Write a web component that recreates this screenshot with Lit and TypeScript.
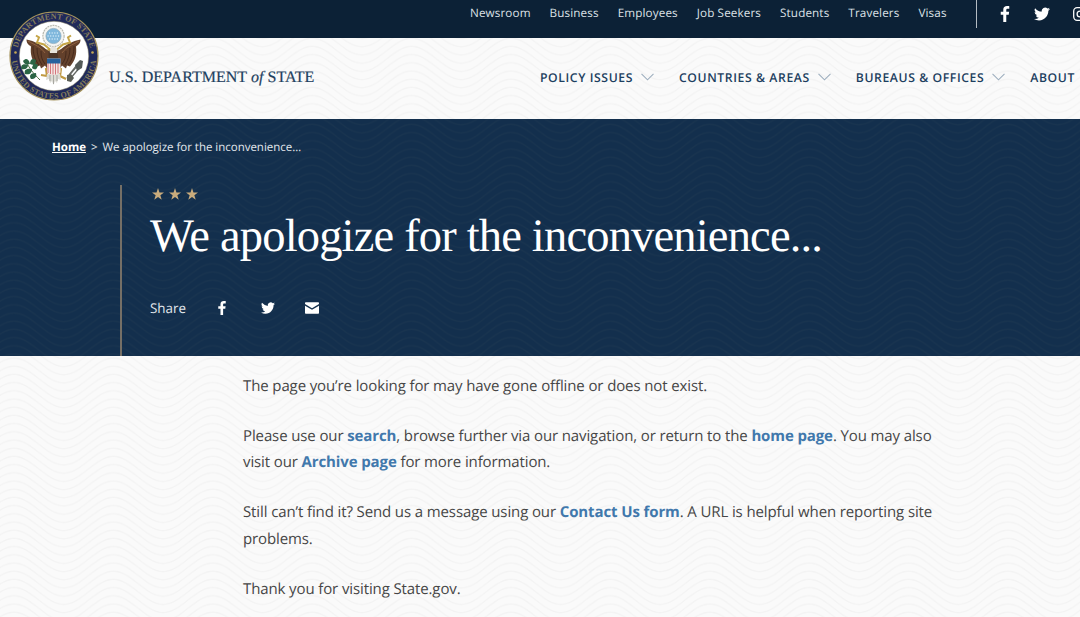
import { LitElement, css, html, svg } from 'lit'
import { customElement, property } from 'lit/decorators.js'

const UTILITY_LINKS = ['Newsroom', 'Business', 'Employees', 'Job Seekers', 'Students', 'Travelers', 'Visas']
const MAIN_LINKS = ['Policy Issues', 'Countries & Areas', 'Bureaus & Offices']

const ICONS = {
  facebook: svg`<path d="M9.4 24V13.2H5.6V8.8h3.8V5.6C9.4 1.9 11.6 0 15 0c1.6 0 3 .1 3.4.2v3.9h-2.3c-1.9 0-2.2.9-2.2 2.2v2.5h4.3l-.6 4.4h-3.7V24z"/>`,
  twitter: svg`<path d="M24 4.6a10 10 0 0 1-2.8.8 4.9 4.9 0 0 0 2.1-2.7 9.9 9.9 0 0 1-3.1 1.2 4.9 4.9 0 0 0-8.4 4.5A14 14 0 0 1 1.7 3.2a4.9 4.9 0 0 0 1.5 6.5 4.9 4.9 0 0 1-2.2-.6v.1a4.9 4.9 0 0 0 3.9 4.8 4.9 4.9 0 0 1-2.2.1 4.9 4.9 0 0 0 4.6 3.4A9.9 9.9 0 0 1 0 19.5 13.9 13.9 0 0 0 7.5 21.7c9.1 0 14.3-7.7 14-14.6A10 10 0 0 0 24 4.6z"/>`,
  instagram: svg`<g fill="none" stroke="currentColor" stroke-width="2.2"><rect x="1.2" y="1.2" width="21.6" height="21.6" rx="6"/><circle cx="12" cy="12" r="5"/></g><circle cx="18.3" cy="5.7" r="1.5"/>`,
  mail: svg`<path d="M1.8 2h20.4C23.3 2 24 2.7 24 3.7v1.600l-12 7-12-7V3.700C0 2.700.7 2 1.800 2z"/><path d="M0 8l12 7 12-7v12.200c0 1.100-.7 1.800-1.800 1.800H1.800C.7 22 0 21.300 0 20.200z"/>`,
}

@customElement('social-icon')
export class SocialIcon extends LitElement {
  @property({ type: String }) name: keyof typeof ICONS = 'facebook'

  static styles = css`
    :host { display: block; flex: none; }
    svg { display: block; width: 100%; height: 100%; fill: currentColor; }
  `

  render() {
    return html`<svg viewBox="0 0 24 24" aria-hidden="true">${ICONS[this.name]}</svg>`
  }
}

@customElement('wave-pattern')
export class WavePattern extends LitElement {
  static styles = css`
    :host { position: absolute; inset: 0; overflow: hidden; }
    svg { display: block; width: 100%; height: 100%; }
    path { fill: none; stroke: currentColor; stroke-width: 1.2; }
  `

  render() {
    // the wave is taller than one tile, so neighbouring rows are drawn in too
    const rows = [-3, -2, -1, 0, 1, 2, 3]
    return html`
      <svg aria-hidden="true">
        <defs>
          <pattern id="wave" x="14" y="1.5" width="99.4" height="8.2" patternUnits="userSpaceOnUse">
            ${rows.map(n => svg`<path transform="translate(0 ${n * 8.2})" d="M-49.7 12.5C-31.6 12.5-18.1-12.5 0-12.5S31.6 12.5 49.7 12.5 81.3-12.5 99.4-12.5 131 12.5 149.1 12.5"/>`)}
          </pattern>
        </defs>
        <rect width="100%" height="100%" fill="url(#wave)"/>
      </svg>
    `
  }
}

@customElement('state-seal')
export class StateSeal extends LitElement {
  static styles = css`
    :host { display: block; }
    svg { display: block; width: 100%; height: 100%; }
    text { font: 700 8px 'Liberation Serif', serif; fill: #857e5b; }
  `

  render() {
    return html`
      <svg viewBox="0 0 90 90" role="img" aria-label="Department of State seal">
        <defs>
          <path id="top" d="M8 45a37 37 0 0 1 74 0"/>
          <path id="bottom" d="M2.500 45a42.500 42.500 0 0 0 85 0"/>
        </defs>
        <circle cx="45" cy="45" r="44" fill="#20295a" stroke="#a5935b" stroke-width="1.2"/>
        <circle cx="45" cy="45" r="34.700" fill="#fff" stroke="#8d8766" stroke-width=".5"/>
        <text><textPath href="#top" startOffset="50%" text-anchor="middle" textLength="100">DEPARTMENT OF STATE</textPath></text>
        <text><textPath href="#bottom" startOffset="50%" text-anchor="middle" textLength="124">UNITED STATES OF AMERICA</textPath></text>
        <circle cx="6.5" cy="41.5" r="1.3" fill="#c6a854"/>
        <circle cx="83.5" cy="41.5" r="1.3" fill="#c6a854"/>

        <!-- glory -->
        <circle cx="44.500" cy="25" r="10.600" fill="#f5f5f2" stroke="#b8b8af" stroke-width="1.200" stroke-dasharray="2 .7"/>
        <circle cx="44.500" cy="25" r="7.600" fill="#7fb7dc" stroke="#8aa9bc" stroke-width=".7"/>
        <path d="M40 22h9M38.500 25h12M40 28h9" stroke="#c9e5f5" stroke-width="1.300" stroke-dasharray="1.200 1.400"/>

        <!-- wings -->
        <path d="M17.500 28.500c0 4 2 5 4.500 7-1 8 1 14 6 20l3-1 1 3 4-3 2 3 3-6v-12c-6 0-6-7-23.500-11z" fill="#63402b"/>
        <path d="M71.500 28.500c0 4-2 5-4.500 7 1 8-1 14-6 20l-3-1-1 3-4-3-2 3-3-6v-12c6 0 6-7 23.500-11z" fill="#63402b"/>
        <path d="M24 35c0 8 2 14 6 19M28 37c0 7 2 12 5 17M32 40c0 6 1 9 4 13M65 35c0 8-2 14-6 19M61 37c0 7-2 12-5 17M57 40c0 6-1 9-4 13" fill="none" stroke="#3f2418" stroke-width=".8"/>
        <path d="M19 30c7 4 13 6 17 12M70 30c-7 4-13 6-17 12" fill="none" stroke="#9a6845" stroke-width=".8"/>

        <!-- ribbon -->
        <path d="M27 24.500l3 2-2 5 7 2 6 5M62 24.500l-3 2 2 5-7 2-6 5" fill="none" stroke="#c5a548" stroke-width="2"/>

        <!-- legs and tail -->
        <path d="M37 57l1 8-6-1M52 57l-1 8 6 3" fill="none" stroke="#c19a42" stroke-width="2.200"/>
        <path d="M38 63l-1 6 3-1 1 4 2-2 1.500 4 1.500-4 2 2 1-4 3 1-1-6z" fill="#dddcd5"/>
        <path d="M41 64v6M44.500 64v9M48 64v6" stroke="#9a9a94" stroke-width=".8"/>

        <!-- head -->
        <path d="M40 48c-1-6-1-10 3.500-11.500 4-.5 6 4 5.500 11.500z" fill="#4c3528"/>
        <path d="M41 42c-1-4 0-6 3-6.500 3-.5 5 2 4 6.500z" fill="#e7e4dc"/>
        <path d="M41 37l-3.500 2 4 .8z" fill="#c9a337"/>

        <!-- olive branch -->
        <path d="M17 50c3 7 7 12 14 19" fill="none" stroke="#4c7142" stroke-width="1"/>
        <path d="M14 50c4-4 6-1 7 3-4 1-6 0-7-3zM19 54c-6-2-7 1-7 4 5 1 7-1 7-4zM21 53c0-5 3-6 6-4 0 4-2 6-6 4zM23 58c-7-1-8 2-7 5 5 1 7-1 7-5zM23 57c1-5 3-5 6-3-1 4-2 6-6 3zM27 62c-6 0-7 3-5 6 4 0 6-2 5-6z" fill="#2c6545"/>

        <!-- arrows -->
        <path d="M58 67l11-13M61 68l11-13M60 64l8-10" stroke="#666864" stroke-width="1.300"/>
        <path d="M66 54l5-5 3 1-1 7-5 3z" fill="#535957"/>
        <path d="M58 64l4-1 3 4-3 4-4-1z" fill="#5c5f57"/>

        <!-- shield -->
        <path d="M38 47.500h13.500v14c-2 2-4 2-6.700 2.500-3-.5-5-.5-6.800-2.500z" fill="#f3e6e3"/>
        <path d="M39 49v13M41.500 49v14M44 49v14.500M46.500 49v14.500M49 49v13.500" stroke="#d3757a" stroke-width="1"/>
        <path d="M38 47.500h13.500v5H38z" fill="#27619d"/>
      </svg>
    `
  }
}

@customElement('app-root')
export class AppRoot extends LitElement {
  static styles = css`
    :host {
      --navy: #132f4d;
      --gold: #c9ab7c;
      display: flex;
      flex-direction: column;
      position: relative;
      height: 617px;
      overflow: hidden;
      background: #fafafa;
      color: #464646;
      font-family: 'Open Sans', sans-serif;
      text-rendering: geometricPrecision;
    }
    a { color: inherit; text-decoration: none; }

    .page-waves { color: #f3f3f3; }
    .topbar, .header, .hero, .content { position: relative; flex: none; box-sizing: border-box; }

    .topbar {
      display: flex;
      height: 38px;
      padding-left: 470px;
      background: #0c2136;
      color: #dde2e7;
    }
    .utility {
      display: flex;
      gap: 19px;
      width: 506px;
      flex: none;
      font-size: 11.7px;
      line-height: 26px;
      letter-spacing: .12px;
      white-space: nowrap;
    }
    .social {
      display: flex;
      align-items: center;
      gap: 20.5px;
      height: 28px;
      padding-left: 20px;
      border-left: 1px solid #b4bcc3;
      color: #fff;
    }
    .social social-icon { width: 16px; height: 16px; }
    .social social-icon:last-child { margin-left: 3px; width: 14px; height: 14px; }

    .header {
      display: flex;
      height: 80.5px;
      padding-left: 109px;
      align-items: center;
      color: #1d3f60;
      white-space: nowrap;
    }
    .seal { position: absolute; left: 9px; top: -27px; width: 90px; height: 90px; }
    .brand {
      width: 431px;
      flex: none;
      font: 16px 'Liberation Serif', serif;
      letter-spacing: .04px;
      padding-bottom: 1px;
      -webkit-text-stroke: .2px currentColor;
    }
    .main-nav {
      display: flex;
      align-items: center;
      gap: 25px;
      padding-bottom: 2px;
      font-size: 12.2px;
      font-weight: 600;
      letter-spacing: .6px;
      text-transform: uppercase;
    }
    .main-nav a { display: flex; align-items: center; gap: 8px; }
    .chevron { width: 13px; height: 8px; fill: none; stroke: #9eafbf; stroke-width: 1.1; }

    .hero {
      height: 237.5px;
      background: var(--navy);
      color: #fff;
    }
    .hero-waves { color: #19344f; }
    .crumbs {
      display: flex;
      position: relative;
      gap: 5px;
      padding: 19px 0 0 52px;
      font-size: 11.5px;
      line-height: 20px;
      letter-spacing: -.02px;
      color: #e2e7ec;
    }
    .crumbs a { font-weight: 700; text-decoration: underline; color: #fff; }
    .hero-body {
      position: relative;
      box-sizing: border-box;
      height: 171px;
      margin: 27.5px 0 0 120px;
      padding: 3px 0 0 28px;
      border-left: 2px solid #756f66;
    }
    .stars { display: flex; gap: 5.4px; padding-left: 1.5px; }
    .stars svg { width: 12px; height: 12px; fill: var(--gold); }
    h1 {
      margin: 7px 0 0;
      font: 400 46.5px/60px 'Liberation Serif', serif;
      letter-spacing: -.82px;
      white-space: nowrap;
    }
    .share {
      display: flex;
      align-items: center;
      margin-top: 29px;
      font-size: 13.4px;
      line-height: 24px;
      color: #e2e7ec;
    }
    .share social-icon { width: 14px; height: 14px; color: #fff; }
    .share social-icon:nth-of-type(1) { margin-left: 28.5px; }
    .share social-icon:nth-of-type(2) { margin-left: 32px; }
    .share social-icon:nth-of-type(3) { margin-left: 30px; }

    .content {
      padding: 17px 0 0 243px;
      font-size: 15px;
      line-height: 26.7px;
      letter-spacing: -.115px;
      white-space: nowrap;
    }
    .content p { margin: 0 0 23px; }
    .content a { font-weight: 700; color: #4178ac; }
  `

  private _chevron() {
    return html`<svg class="chevron" viewBox="0 0 13 8"><path d="M.5.8l6 6 6-6"/></svg>`
  }

  render() {
    return html`
      <wave-pattern class="page-waves"></wave-pattern>

      <nav class="topbar">
        <div class="utility">${UTILITY_LINKS.map(label => html`<a href="#">${label}</a>`)}</div>
        <div class="social">
          <social-icon name="facebook"></social-icon>
          <social-icon name="twitter"></social-icon>
          <social-icon name="instagram"></social-icon>
        </div>
      </nav>

      <header class="header">
        <state-seal class="seal"></state-seal>
        <a class="brand" href="#">U.S. DEPARTMENT <i>of</i> STATE</a>
        <nav class="main-nav">
          ${MAIN_LINKS.map(label => html`<a href="#">${label}${this._chevron()}</a>`)}
          <a href="#">About</a>
        </nav>
      </header>

      <section class="hero">
        <wave-pattern class="hero-waves"></wave-pattern>
        <div class="crumbs"><a href="#">Home</a><span>&gt;</span><span>We apologize for the inconvenience…</span></div>
        <div class="hero-body">
          <div class="stars">
            ${[0, 1, 2].map(() => html`<svg viewBox="0 0 22 22"><path d="M11 0l2.700 8.200H22l-6.700 5 2.500 8.300-6.800-5-6.800 5 2.500-8.300L0 8.200h8.300z"/></svg>`)}
          </div>
          <h1>We apologize for the inconvenience...</h1>
          <div class="share">
            <span>Share</span>
            <social-icon name="facebook"></social-icon>
            <social-icon name="twitter"></social-icon>
            <social-icon name="mail"></social-icon>
          </div>
        </div>
      </section>

      <main class="content">
        <p>The page you’re looking for may have gone offline or does not exist.</p>
        <p>Please use our <a href="#">search</a>, browse further via our navigation, or return to the <a href="#">home page</a>. You may also<br>visit our <a href="#">Archive page</a> for more information.</p>
        <p>Still can’t find it? Send us a message using our <a href="#">Contact Us form</a>. A URL is helpful when reporting site<br>problems.</p>
        <p>Thank you for visiting State.gov.</p>
      </main>
    `
  }
}
